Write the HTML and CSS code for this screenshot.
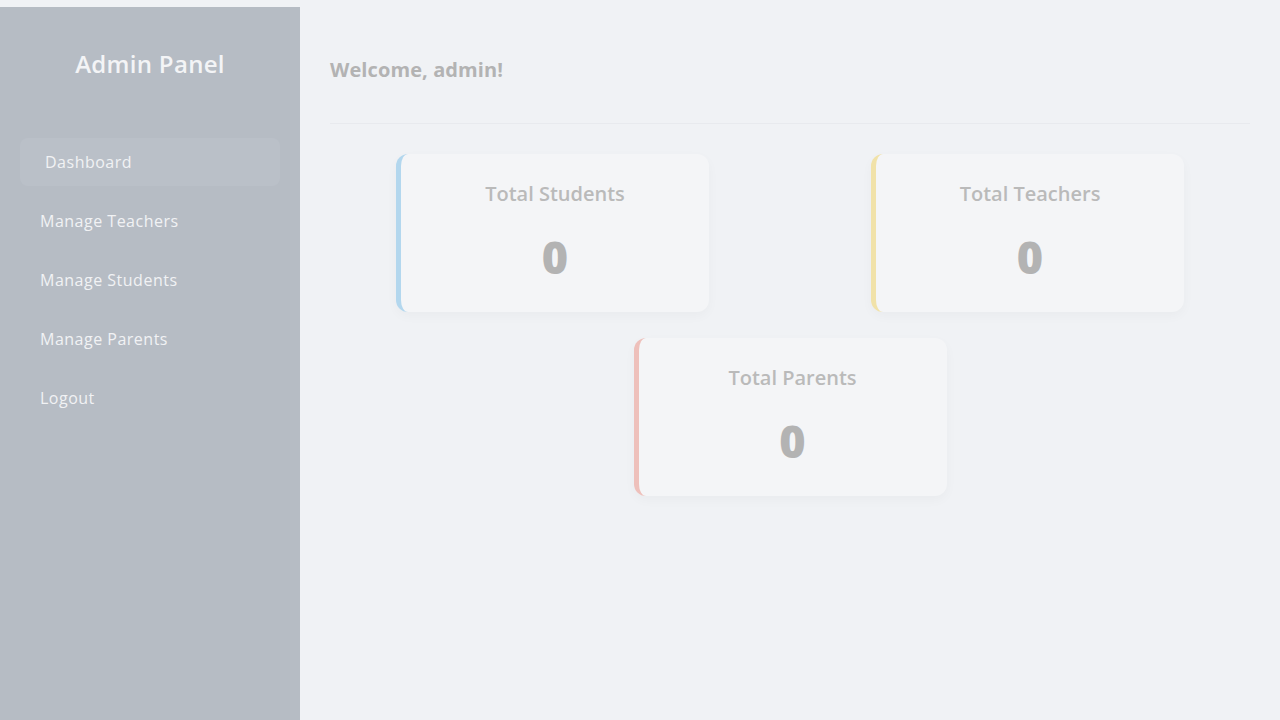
FILE: index.html
```html
<!DOCTYPE html>
<html lang="en">
<head>
<meta charset="utf-8">
<title>Admin Panel</title>
<link rel="stylesheet" href="styles.css">
</head>
<body>
<div class="layout">
  <aside class="sidebar">
    <h2 class="brand">Admin Panel</h2>
    <nav class="nav">
      <a class="nav-link active" href="#">Dashboard</a>
      <a class="nav-link" href="#">Manage Teachers</a>
      <a class="nav-link" href="#">Manage Students</a>
      <a class="nav-link" href="#">Manage Parents</a>
      <a class="nav-link" href="#">Logout</a>
    </nav>
  </aside>
  <main class="main">
    <header class="header">
      <h1 class="welcome">Welcome, admin!</h1>
    </header>
    <section class="cards">
      <div class="card card-blue">
        <h3 class="card-title">Total Students</h3>
        <p class="card-value">0</p>
      </div>
      <div class="card card-yellow">
        <h3 class="card-title">Total Teachers</h3>
        <p class="card-value">0</p>
      </div>
      <div class="card card-red">
        <h3 class="card-title">Total Parents</h3>
        <p class="card-value">0</p>
      </div>
    </section>
  </main>
</div>
</body>
</html>
```

FILE: styles.css
```css
* { box-sizing: border-box; }
html, body { margin: 0; padding: 0; }
body {
  background: #f0f2f5;
  font-family: "Open Sans", "Noto Sans", sans-serif;
  height: 720px;
  overflow: hidden;
}
.layout {
  display: flex;
  height: 720px;
}
.sidebar {
  width: 300px;
  flex: 0 0 300px;
  margin-top: 7px;
  background: #b6bcc4;
  padding: 40px 20px;
}
.brand {
  margin: 0 0 57px;
  text-align: center;
  color: #f3f4f6;
  font-size: 24px;
  font-weight: 600;
  line-height: 34px;
  letter-spacing: 0.3px;
}
.nav {
  display: flex;
  flex-direction: column;
  gap: 11px;
}
.nav-link {
  display: block;
  height: 48px;
  line-height: 48px;
  padding: 0 20px;
  border-radius: 8px;
  color: #f1f2f4;
  text-decoration: none;
  font-size: 16px;
  letter-spacing: 0.5px;
}
.nav-link.active {
  background: #bac0c8;
  padding-left: 25px;
}
.main {
  flex: 1;
  padding: 50px 30px 30px;
}
.header {
  border-bottom: 1px solid #e8eaee;
  padding-bottom: 33px;
  margin-bottom: 30px;
}
.welcome {
  margin: 0;
  color: #b3b3b3;
  font-size: 20px;
  font-weight: 700;
  line-height: 40px;
  letter-spacing: 0.1px;
}
.cards {
  display: flex;
  flex-wrap: wrap;
  justify-content: space-around;
  column-gap: 30px;
  row-gap: 26px;
}
.card {
  width: 313px;
  height: 158px;
  background: #f4f5f7;
  border-radius: 12px;
  border-left: 5px solid #b3d7ee;
  box-shadow: 0 4px 12px rgba(0, 0, 0, 0.03);
  text-align: center;
  padding-top: 25px;
}
.card-yellow { border-left-color: #f1e2a9; }
.card-red { border-left-color: #eec0bb; }
.card-title {
  margin: 0;
  color: #bababa;
  font-size: 20px;
  font-weight: 600;
  line-height: 30px;
}
.card-value {
  margin: 25px 0 0;
  color: #b3b3b3;
  font-size: 45px;
  font-weight: 800;
  line-height: 46px;
}
```
